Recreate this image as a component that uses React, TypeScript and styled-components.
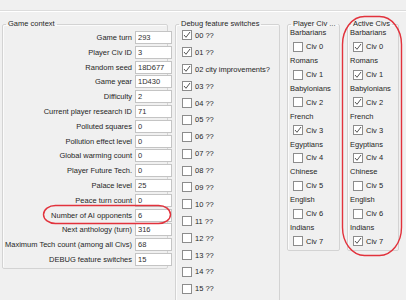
import React from "react"
import styled, { createGlobalStyle } from "styled-components"

const GlobalStyle = createGlobalStyle`
  html, body {
    margin: 0;
    padding: 0;
    background: #f0f0f0;
  }
  body {
    font-family: "Liberation Sans", Arial, sans-serif;
    font-size: 7.5px;
    color: #262626;
  }
`

const Window = styled.div`
  position: relative;
  width: 406px;
  height: 300px;
  overflow: hidden;
  background: #f0f0f0;
`

const TopStrip = styled.div`
  height: 10px;
  border-bottom: 1px solid #dcdcdc;
  box-shadow: 0 1px 0 #ffffff;
`

const Panels = styled.div`
  display: flex;
  align-items: flex-start;
  gap: 7px;
  padding: 8px 0 0 2px;
`

const GroupBox = styled.fieldset<{ $width: number; $height: number }>`
  box-sizing: border-box;
  width: ${({ $width }) => $width}px;
  height: ${({ $height }) => $height}px;
  margin: 0;
  padding: 0 2px 1px 2px;
  min-width: 0;
  border: 1px solid #d3d3d3;
  border-radius: 2px;
  box-shadow: inset 1px 1px 0 #fbfbfb;
`

const GroupTitle = styled.legend`
  margin-left: 1px;
  padding: 0 2px;
  line-height: 10px;
  white-space: nowrap;
`

const FieldGrid = styled.div`
  display: grid;
  grid-template-columns: 1fr 37px;
  column-gap: 3px;
  row-gap: 1.8px;
  margin-top: 2px;
`

const FieldLabel = styled.div`
  text-align: right;
  line-height: 13px;
  white-space: nowrap;
`

const FieldInput = styled.input`
  box-sizing: border-box;
  width: 37px;
  height: 13px;
  margin: 0;
  padding: 0 2px;
  border: 1px solid #c4c4c4;
  background: #ffffff;
  font-family: inherit;
  font-size: 7.5px;
  color: #303030;
  outline: none;
`

const SwitchList = styled.div`
  display: flex;
  flex-direction: column;
  margin-top: -2px;
  padding-left: 4px;
`

const SwitchRow = styled.div<{ $height: number; $indent?: number }>`
  display: flex;
  align-items: center;
  gap: 3px;
  height: ${({ $height }) => $height}px;
  padding-left: ${({ $indent }) => $indent ?? 0}px;
  white-space: nowrap;
`

const CivName = styled.div`
  display: flex;
  align-items: center;
  height: 13.9px;
  white-space: nowrap;
`

const CivList = styled.div`
  display: flex;
  flex-direction: column;
  margin-top: -3px;
`

const Box = styled.span`
  box-sizing: border-box;
  display: inline-flex;
  align-items: center;
  justify-content: center;
  width: 10px;
  height: 10px;
  border: 1px solid #8c8c8c;
  background: #ffffff;
`

const Overlay = styled.svg`
  position: absolute;
  left: 0;
  top: 0;
  pointer-events: none;
`

const CheckBox = ({ checked }: { checked: boolean }) => (
  <Box>
    {checked && (
      <svg width="8" height="8" viewBox="0 0 8 8">
        <path d="M1 4 L3 6.3 L7 1" fill="none" stroke="#555555" strokeWidth="1" />
      </svg>
    )}
  </Box>
)

const fields: [string, string][] = [
  ["Game turn", "293"],
  ["Player Civ ID", "3"],
  ["Random seed", "18D677"],
  ["Game year", "1D430"],
  ["Difficulty", "2"],
  ["Current player research ID", "71"],
  ["Polluted squares", "0"],
  ["Pollution effect level", "0"],
  ["Global warming count", "0"],
  ["Player Future Tech.", "0"],
  ["Palace level", "25"],
  ["Peace turn count", "0"],
  ["Number of AI opponents", "6"],
  ["Next anthology (turn)", "316"],
  ["Maximum Tech count (among all Civs)", "68"],
  ["DEBUG feature switches", "15"],
]

const switches = Array.from({ length: 16 }, (_, i) => {
  const num = i.toString().padStart(2, "0")
  return {
    label: i === 2 ? `${num} city improvements?` : `${num} ??`,
    checked: i < 4,
  }
})

const civs = [
  "Barbarians",
  "Romans",
  "Babylonians",
  "French",
  "Egyptians",
  "Chinese",
  "English",
  "Indians",
]

const playerCivs = [3]
const activeCivs = [0, 1, 2, 3, 4, 7]

const CivGroup = ({
  title,
  width,
  checked,
}: {
  title: string
  width: number
  checked: number[]
}) => (
  <GroupBox $width={width} $height={232}>
    <GroupTitle>{title}</GroupTitle>
    <CivList>
      {civs.map((name, i) => (
        <React.Fragment key={name}>
          <CivName>{name}</CivName>
          <SwitchRow $height={13.9} $indent={3}>
            <CheckBox checked={checked.includes(i)} />
            Civ {i}
          </SwitchRow>
        </React.Fragment>
      ))}
    </CivList>
  </GroupBox>
)

const App = () => (
  <Window>
    <GlobalStyle />
    <TopStrip />
    <Panels>
      <GroupBox $width={166} $height={250}>
        <GroupTitle>Game context</GroupTitle>
        <FieldGrid>
          {fields.map(([label, value]) => (
            <React.Fragment key={label}>
              <FieldLabel>{label}</FieldLabel>
              <FieldInput readOnly value={value} />
            </React.Fragment>
          ))}
        </FieldGrid>
      </GroupBox>
      <GroupBox $width={105} $height={310}>
        <GroupTitle>Debug feature switches</GroupTitle>
        <SwitchList>
          {switches.map(s => (
            <SwitchRow key={s.label} $height={16.9}>
              <CheckBox checked={s.checked} />
              {s.label}
            </SwitchRow>
          ))}
        </SwitchList>
      </GroupBox>
      <CivGroup title="Player Civ ..." width={53} checked={playerCivs} />
      <CivGroup title="Active Civs" width={52} checked={activeCivs} />
    </Panels>
    <Overlay width="406" height="300" viewBox="0 0 406 300">
      <rect
        x="342.5"
        y="16.5"
        width="59"
        height="239"
        rx="22"
        ry="28"
        fill="none"
        stroke="#e2323c"
        strokeWidth="1.4"
      />
      <rect
        x="43.5"
        y="205.5"
        width="127"
        height="18"
        rx="12"
        ry="9"
        fill="none"
        stroke="#e2323c"
        strokeWidth="1.4"
      />
    </Overlay>
  </Window>
)

export default App
